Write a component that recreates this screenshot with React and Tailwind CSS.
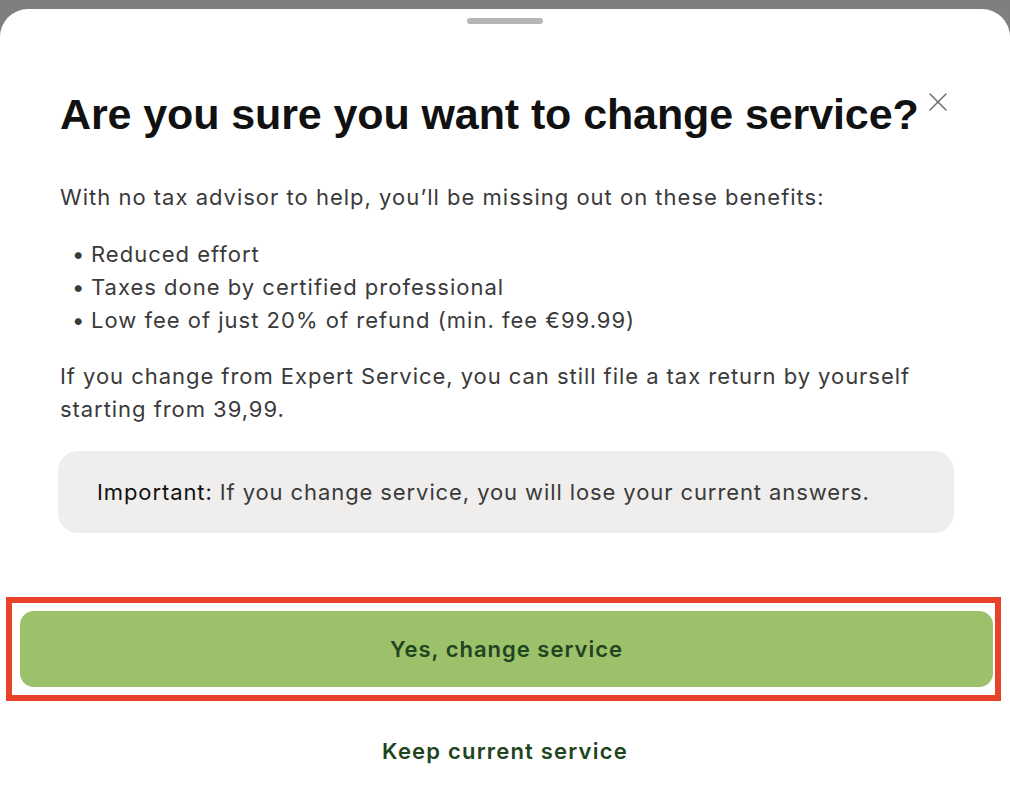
import { X } from 'lucide-react'

const benefits = [
  'Reduced effort',
  'Taxes done by certified professional',
  'Low fee of just 20% of refund (min. fee €99.99)',
]

export default function App() {
  return (
    <div className="h-[790px] w-[1010px] overflow-hidden bg-[#807e7e] pt-[9px] font-['Inter',sans-serif]">
      <div className="relative flex h-[781px] flex-col rounded-t-[28px] bg-white">
        {/* Drag handle */}
        <div className="mx-auto mt-[9px] h-[6px] w-[76px] rounded-full bg-[#b6b6b6]" />

        <button className="absolute right-[56px] top-[77px] text-[#6b6b6b]">
          <X size={32} strokeWidth={1.1} />
        </button>

        <div className="px-[60px]">
          <h1 className="mt-[64px] font-['Liberation_Sans',sans-serif] text-[43px] font-bold leading-[52px] tracking-[-0.1px] text-[#111]">
            Are you sure you want to change service?
          </h1>

          <p className="mt-[41px] text-[22px] leading-[33px] tracking-[1px] text-[#3a3a3a]">
            With no tax advisor to help, you’ll be missing out on these benefits:
          </p>

          <ul className="mt-[24px] text-[22px] leading-[33px] tracking-[1px] text-[#3a3a3a]">
            {benefits.map((b) => (
              <li key={b} className="flex">
                <span className="w-[31px] pl-[12px]">•</span>
                {b}
              </li>
            ))}
          </ul>

          <p className="mt-[23px] text-[22px] leading-[33px] tracking-[0.95px] text-[#3a3a3a]">
            If you change from Expert Service, you can still file a tax return by yourself starting from 39,99.
          </p>
        </div>

        {/* Notice */}
        <div className="ml-[58px] mr-[56px] mt-[25px] rounded-[20px] bg-[#efeeec] px-[39px] py-[24px] text-[22px] leading-[34px] tracking-[0.9px] text-[#3a3a3a]">
          <span className="text-[#111]">Important:</span> If you change service, you will lose your current answers.
        </div>

        {/* Actions */}
        <div className="ml-[6px] mr-[9px] mt-[64px] border-[6px] border-[#e8432a] pb-[8px] pl-[8px] pr-[2px] pt-[8px]">
          <button className="flex h-[76px] w-full items-center justify-center rounded-[14px] bg-[#9dc06a] text-[22px] font-semibold tracking-[1px] text-[#1f4520]">
            Yes, change service
          </button>
        </div>

        <button className="mx-auto mt-[34px] text-[22px] font-semibold tracking-[1.2px] text-[#1f4520]">
          Keep current service
        </button>
      </div>
    </div>
  )
}
